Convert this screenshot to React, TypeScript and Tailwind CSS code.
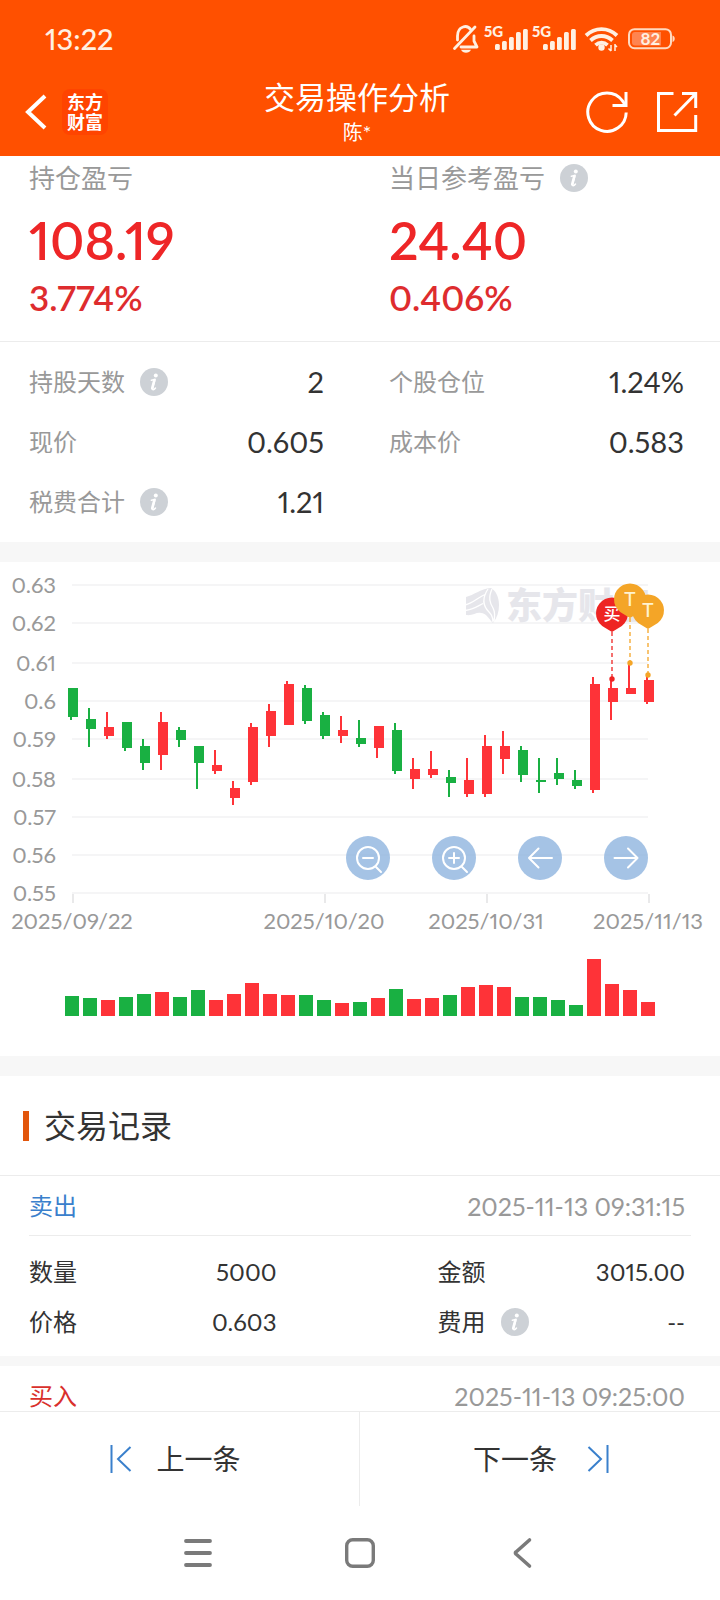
import type { ReactNode } from "react";

type Candle = {
  up: boolean;
  open: number;
  close: number;
  high: number;
  low: number;
  volume: number;
};

// Rows are: rising day, body top, body bottom, wick top, wick bottom, volume height.
const rows: [boolean, number, number, number, number, number][] = [
  [false, 126, 155, 126, 158, 20],
  [false, 157, 167, 146, 185, 18],
  [true, 165, 174, 150, 177, 16],
  [false, 160, 186, 160, 189, 19],
  [false, 184, 201, 177, 208, 22],
  [true, 160, 193, 150, 208, 24],
  [false, 168, 178, 165, 185, 19],
  [false, 184, 201, 184, 227, 26],
  [true, 203, 209, 188, 212, 16],
  [true, 226, 236, 219, 243, 22],
  [true, 165, 220, 161, 223, 33],
  [true, 149, 174, 142, 185, 22],
  [true, 122, 163, 119, 163, 21],
  [false, 126, 159, 123, 162, 21],
  [false, 153, 174, 150, 177, 16],
  [true, 168, 174, 154, 181, 13],
  [false, 176, 182, 158, 185, 14],
  [true, 164, 186, 164, 196, 18],
  [false, 168, 209, 161, 212, 27],
  [true, 207, 217, 196, 227, 17],
  [true, 207, 213, 189, 216, 18],
  [false, 215, 221, 208, 235, 21],
  [true, 218, 232, 196, 235, 29],
  [true, 184, 232, 173, 235, 31],
  [true, 184, 197, 169, 212, 29],
  [false, 188, 213, 184, 220, 19],
  [false, 218, 220, 196, 231, 19],
  [false, 211, 217, 196, 223, 16],
  [false, 218, 224, 208, 227, 11],
  [true, 122, 228, 115, 231, 57],
  [true, 126, 140, 119, 158, 32],
  [true, 126, 132, 103, 132, 26],
  [true, 118, 140, 115, 142, 14],
];

const candles: Candle[] = rows.map(([up, open, close, high, low, volume]) => ({
  up,
  open,
  close,
  high,
  low,
  volume,
}));

const priceTicks: [string, number][] = [
  ["0.63", 23],
  ["0.62", 61],
  ["0.61", 101],
  ["0.6", 139],
  ["0.59", 177],
  ["0.58", 217],
  ["0.57", 255],
  ["0.56", 293],
  ["0.55", 331],
];

const dateTicks: [string, number][] = [
  ["2025/09/22", 73],
  ["2025/10/20", 325],
  ["2025/10/31", 487],
  ["2025/11/13", 649],
];

const RED = "#fe3338";
const GREEN = "#19b042";

function InfoButton({ label }: { label: string }) {
  return (
    <button
      type="button"
      aria-label={label}
      className="flex h-7 w-7 shrink-0 items-center justify-center rounded-full bg-[#cdd1d6]"
    >
      <svg viewBox="0 0 28 28" className="h-7 w-7" fill="none">
        <circle cx="15.800" cy="7.600" r="2" fill="#fff" />
        <path
          d="M11.300 12.200c1.400-.1 2.400-.5 3.800-.9l-2.600 9.200c-.4 1.700 1.300 1.600 3-.5"
          stroke="#fff"
          strokeWidth="1.500"
          strokeLinecap="round"
          strokeLinejoin="round"
        />
        <path d="M14.300 12.300 12.200 20.400" stroke="#fff" strokeWidth="2.600" strokeLinecap="round" />
      </svg>
    </button>
  );
}

function StatusIcons() {
  const bars: [number, number][] = [
    [0, 44],
    [7, 41],
    [14, 37],
    [21, 32],
    [28, 29],
  ];
  return (
    <svg viewBox="450 20 230 38" className="h-[38px] w-[230px]" fill="none" aria-hidden="true">
      <g stroke="#fff0e2" strokeWidth="2.800" strokeLinecap="round" strokeLinejoin="round">
        <path d="M471 30c-2-3-5-4.200-8-3-4 1.400-5.500 5-5.500 9v4" />
        <path d="M461 47h16l-3-6v-5" />
        <path d="M475 27 454.500 48.500" />
      </g>
      <path d="M461 49.800h10c-1.500 4-8.500 4-10 0z" fill="#fff0e2" />
      {[495, 543].map((x) => (
        <g key={x} fill="#fff0e2">
          <text x={x - 11} y="37" fontSize="15" fontWeight="900" fontFamily="Lato, sans-serif">
            5G
          </text>
          {bars.map(([dx, top]) => (
            <rect key={dx} x={x + dx} y={top} width="4.800" height={50 - top} rx="1.500" />
          ))}
        </g>
      ))}
      <g stroke="#fff0e2" strokeWidth="3.800">
        <path d="M586 35.500c9-8.500 22-8.500 31 0" />
        <path d="M590.500 40.500c6.500-6 15.500-6 22 0" />
        <path d="M595.500 45.200c3.700-3.300 8.500-3.300 12 0" />
      </g>
      <circle cx="601.500" cy="47.500" r="3.200" fill="#fff0e2" />
      <path d="M611 45v6M615 44v7M608.500 48.500l2.500 2.500M615 45l2 2" stroke="#fff0e2" strokeWidth="1.500" />
      <rect x="629" y="29.200" width="42" height="19" rx="5.500" stroke="#ffd9c0" strokeWidth="2" />
      <path d="M635 32h26v13.500h-26a3 3 0 0 1-3-3v-7.500a3 3 0 0 1 3-3z" fill="#ff8450" />
      <path d="M672.500 35.500c3 .5 3 6 0 6.500z" fill="#ffd9c0" />
      <text
        x="650.500"
        y="45"
        textAnchor="middle"
        fontSize="17"
        fontWeight="700"
        fontFamily="Lato, sans-serif"
        fill="#fff0e2"
      >
        82
      </text>
    </svg>
  );
}

function Header() {
  return (
    <header className="shrink-0 bg-[#ff5000] text-white">
      <div className="flex h-[78px] items-center justify-between pr-10 pl-[45px]">
        <time className="text-[29px] leading-9 font-medium text-[#fff0e2]">13:22</time>
        <StatusIcons />
      </div>
      <div className="grid h-[78px] grid-cols-[1fr_auto_1fr] items-start pr-[22px] pl-4">
        <div className="flex h-[68px] items-center gap-1.5">
          <button type="button" aria-label="返回" className="flex h-11 w-10 items-center justify-center">
            <svg viewBox="0 0 40 44" className="h-11 w-10" fill="none">
              <path d="M29 6 12 22l17 16" stroke="#fff" strokeWidth="4" />
            </svg>
          </button>
          <div className="flex h-[46px] w-[46px] flex-col items-center justify-center rounded-lg bg-[#ff4400] text-[18px] leading-5 font-bold">
            <span>东方</span>
            <span>财富</span>
          </div>
        </div>
        <div className="flex flex-col items-center">
          <h1 className="text-[31px] leading-[38px]">交易操作分析</h1>
          <p className="text-[20px] leading-8">陈*</p>
        </div>
        <div className="flex h-[68px] items-center justify-end gap-7">
          <button type="button" aria-label="刷新">
            <svg viewBox="0 0 42 42" className="h-[42px] w-[42px]" fill="none" stroke="#fff" strokeWidth="3">
              <path d="M40.200 21.500A19.200 19.200 0 1 1 36.500 9.800l2.500 3.700" />
              <path d="M40 1v13.500H26.500" />
            </svg>
          </button>
          <button type="button" aria-label="分享">
            <svg viewBox="0 0 42 42" className="h-[42px] w-[42px]" fill="none" stroke="#fff" strokeWidth="3">
              <path d="M17.500 2.400h-15v37.200h37.200V24" />
              <path d="M26 2.400h13.700V17" />
              <path d="M18.500 24.500 39 3.500" />
            </svg>
          </button>
        </div>
      </div>
    </header>
  );
}

function Profit({ label, value, percent, info }: { label: string; value: string; percent: string; info?: boolean }) {
  return (
    <div className="pl-[29px]">
      <div className="flex h-11 items-center gap-[15px]">
        <span className="text-[26px] leading-8 text-[#999]">{label}</span>
        {info && <InfoButton label={label + "说明"} />}
      </div>
      <div className="flex h-20 items-center text-[52px] leading-none font-semibold text-[#ee2627]">{value}</div>
      <div className="flex h-[34px] items-center text-[35px] leading-none font-semibold text-[#de2c2e]">{percent}</div>
    </div>
  );
}

function Fact({ label, value, info }: { label: string; value: string; info?: boolean }) {
  return (
    <div className="flex h-[60px] items-center pr-9 pl-[29px]">
      <dt className="flex items-center gap-[15px] text-[24px] leading-8 text-[#999]">
        {label}
        {info && <InfoButton label={label + "说明"} />}
      </dt>
      <dd className="ml-auto text-[29px] leading-8 text-[#333]">{value}</dd>
    </div>
  );
}

function Pin({ x, y, color, ink, text, size, dot }: { x: number; y: number; color: string; ink: string; text: string; size: number; dot: number }) {
  return (
    <g>
      <path d={`M${x} ${y + 18}V${dot}`} stroke={color} strokeWidth="1.300" strokeDasharray="4 3" />
      <circle cx={x} cy={dot} r="2.700" fill={color} />
      <path d={`M${x} ${y + 18}l-7-4.200a16 16 0 1 1 14 0z`} fill={color} />
      <text x={x} y={y + 6} textAnchor="middle" fontSize={size} fontWeight="500" fill={ink}>
        {text}
      </text>
    </g>
  );
}

function RoundButton({ label, children }: { label: string; children: ReactNode }) {
  return (
    <button type="button" aria-label={label} className="h-11 w-11 rounded-full bg-[#8fb4de]/80">
      <svg viewBox="0 0 44 44" className="h-11 w-11" fill="none" stroke="#fff" strokeWidth="2" strokeLinecap="round" strokeLinejoin="round">
        {children}
      </svg>
    </button>
  );
}

function PriceChart() {
  return (
    <section aria-label="K线图" className="relative">
      <svg viewBox="0 0 720 494" className="block h-auto w-full">
        {priceTicks.map(([label, y]) => (
          <g key={label}>
            <path d={`M72 ${y}H648`} stroke="#f5f5f6" strokeWidth="2" />
            <text x="56" y={y + 8} textAnchor="end" fontSize="22" fill="#999">
              {label}
            </text>
          </g>
        ))}
        <g>
          <path
            d="M466 35c8-2 14-8 25-9 5 3 8 9 8 17 0 7-2 13-6 18-4-4-7-10-12-10-5-1-8 3-15 2z"
            fill="#e6e6eb"
          />
          <path
            d="M465 43c9-2 13-8 21-11M465 48.500c8-1 12-4 18-7M488 27c-6 9-5 17 1 23 3 3 4 6 4 10M492 27c-4 9-2 14 1 19 2 4 2 8 1 13"
            fill="none"
            stroke="#fff"
            strokeWidth="1.300"
          />
          <text x="506" y="57" fontSize="36" fontWeight="900" fill="#e6e6eb">
            东方财富
          </text>
        </g>
        {dateTicks.map(([label, x]) => (
          <g key={label}>
            <path d={`M${x} 332v9`} stroke="#e9e9ea" strokeWidth="2" />
            <text x={x - 1} y="367" textAnchor="middle" fontSize="22" fill="#999">
              {label}
            </text>
          </g>
        ))}
        {candles.map((c, i) => (
          <g key={i} fill={c.up ? RED : GREEN}>
            <rect x={70 + i * 18} y={c.high} width="2" height={c.low - c.high} />
            <rect x={68 + i * 18} y={c.open} width="10" height={c.close - c.open} />
            <rect x={65 + i * 18} y={454 - c.volume} width="14" height={c.volume} />
          </g>
        ))}
        <Pin x={612} y={52} color="#ee2423" ink="#fff" text="买" size={17} dot={117} />
        <Pin x={630} y={38} color="#f4a527" ink="#fff3d0" text="T" size={19} dot={101} />
        <Pin x={648} y={49} color="#f4a527" ink="#fff3d0" text="T" size={19} dot={113} />
      </svg>
      <div className="absolute top-[55.4%] right-[10%] flex gap-[42px]">
        <RoundButton label="缩小">
          <circle cx="22" cy="22" r="11" />
          <path d="M17 22h10M30 31l5 5" />
        </RoundButton>
        <RoundButton label="放大">
          <circle cx="22" cy="22" r="11" />
          <path d="M17 22h10M22 17v10M30 31l5 5" />
        </RoundButton>
        <RoundButton label="向左">
          <path d="M34 22H11M20.500 12.500 11 22l9.500 9.500" />
        </RoundButton>
        <RoundButton label="向右">
          <path d="M10.500 22h23M24 12.500l9.500 9.500-9.500 9.500" />
        </RoundButton>
      </div>
    </section>
  );
}

function RecordHead({ side, time, color }: { side: string; time: string; color: string }) {
  return (
    <div className="mx-[29px] flex h-[60px] items-center justify-between border-b border-[#ececec] pr-1.5 leading-8">
      <span className={`text-[24px] ${color}`}>{side}</span>
      <time className="text-[25px] text-[#999]">{time}</time>
    </div>
  );
}

function RecordItem({ label, value, info }: { label: string; value: string; info?: boolean }) {
  return (
    <div className="flex h-[50px] items-center text-[24px] leading-8 text-[#333]">
      <dt className="flex items-center gap-[15px]">
        {label}
        {info && <InfoButton label={label + "说明"} />}
      </dt>
      <dd className="ml-auto">{value}</dd>
    </div>
  );
}

export default function App() {
  return (
    <div className="flex h-screen flex-col bg-white font-[Lato,'Noto_Sans_CJK_SC',sans-serif] [font-variant-numeric:proportional-nums]">
      <Header />
      <main className="min-h-0 flex-1 overflow-y-auto [scrollbar-width:none]">
        <section className="grid grid-cols-2 border-b border-[#ececec] pb-[27px]">
          <Profit label="持仓盈亏" value="108.19" percent="3.774%" />
          <Profit label="当日参考盈亏" value="24.40" percent="0.406%" info />
        </section>
        <dl className="grid grid-cols-2 py-2.5">
          <Fact label="持股天数" value="2" info />
          <Fact label="个股仓位" value="1.24%" />
          <Fact label="现价" value="0.605" />
          <Fact label="成本价" value="0.583" />
          <Fact label="税费合计" value="1.21" info />
        </dl>
        <div className="h-5 bg-[#f7f7f7]" />
        <PriceChart />
        <div className="h-5 bg-[#f7f7f7]" />
        <section>
          <div className="flex h-[100px] items-center gap-[15px] border-b border-[#ececec] pl-[23px]">
            <span className="h-[30px] w-1.5 bg-[#e2560c]" />
            <h2 className="text-[32px] leading-10 text-[#333]">交易记录</h2>
          </div>
          <RecordHead side="卖出" time="2025-11-13 09:31:15" color="text-[#3a80cc]" />
          <dl className="grid grid-cols-2 gap-x-[161px] pt-[11px] pr-[35px] pb-[9px] pl-[29px]">
            <RecordItem label="数量" value="5000" />
            <RecordItem label="金额" value="3015.00" />
            <RecordItem label="价格" value="0.603" />
            <RecordItem label="费用" value="--" info />
          </dl>
          <div className="h-2.5 bg-[#f7f7f7]" />
          <RecordHead side="买入" time="2025-11-13 09:25:00" color="text-[#d9302c]" />
        </section>
      </main>
      <footer className="shrink-0">
        <div className="grid h-[95px] grid-cols-2 border-t border-[#ececec] text-[28px] leading-8 text-[#333]">
          <button type="button" className="flex items-center justify-center gap-6 border-r border-[#ececec] pr-2">
            <svg viewBox="0 0 22 28" className="h-7 w-[22px]" fill="none" stroke="#3a80cc" strokeWidth="2">
              <path d="M1.500 0v28M20.500 2 8 14l12.500 12" />
            </svg>
            上一条
          </button>
          <button type="button" className="flex items-center justify-center gap-[30px] pl-0.5">
            下一条
            <svg viewBox="0 0 22 28" className="h-7 w-[22px]" fill="none" stroke="#3a80cc" strokeWidth="2">
              <path d="M20.500 0v28M1.500 2 14 14 1.500 26" />
            </svg>
          </button>
        </div>
        <nav aria-label="系统导航" className="flex h-[94px] items-center justify-center gap-[130px]">
          <button type="button" aria-label="最近任务">
            <svg viewBox="0 0 32 32" className="h-8 w-8" stroke="#7a7a7a" strokeWidth="3.800" strokeLinecap="round">
              <path d="M4 4h24M4 16h24M4 28h24" />
            </svg>
          </button>
          <button type="button" aria-label="主屏幕">
            <svg viewBox="0 0 32 32" className="h-8 w-8" fill="none" stroke="#7a7a7a" strokeWidth="3.400">
              <rect x="2.700" y="2.700" width="26.600" height="26.600" rx="6" />
            </svg>
          </button>
          <button type="button" aria-label="系统返回">
            <svg viewBox="0 0 32 32" className="h-8 w-8" fill="none" stroke="#7a7a7a" strokeWidth="3.600" strokeLinecap="round" strokeLinejoin="round">
              <path d="M23.500 3 10 15q-1.200 1 0 2l13.500 12" />
            </svg>
          </button>
        </nav>
      </footer>
    </div>
  );
}
